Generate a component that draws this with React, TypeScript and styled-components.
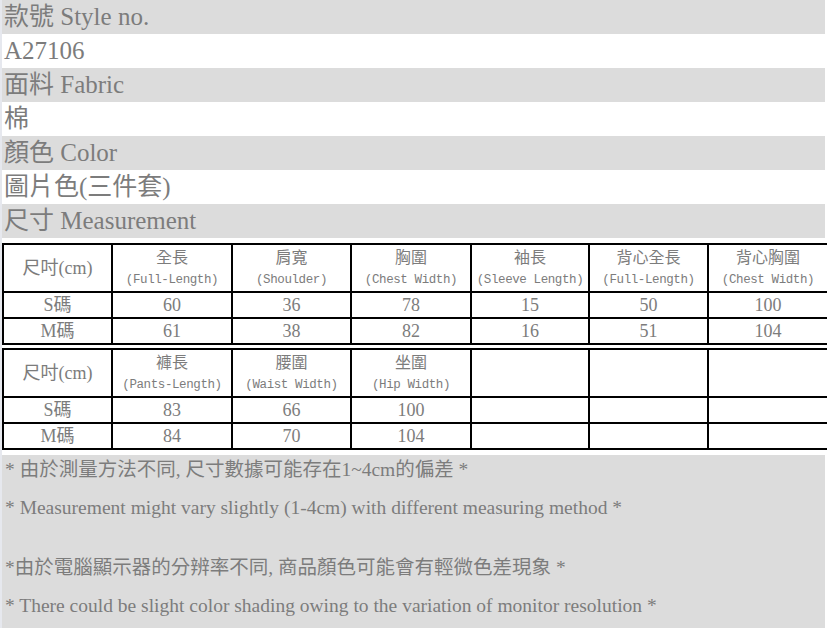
import React from "react";
import styled, { createGlobalStyle } from "styled-components";

const Global = createGlobalStyle`
  html, body { margin: 0; padding: 0; background: #ffffff; }
  body { width: 827px; height: 628px; overflow: hidden; }
`;

const serif = `"Liberation Serif", "Noto Sans CJK TC", serif`;

const Page = styled.div`
  width: 827px;
  height: 628px;
  display: flex;
  flex-direction: column;
  background: #ffffff;
  color: #7c7c7c;
  font-family: ${serif};
  border-left: 2px solid #e6e8ee;
  box-sizing: border-box;
`;

const InfoRow = styled.div<{ $shade: boolean }>`
  height: 34px;
  display: flex;
  align-items: center;
  padding-left: 2px;
  background: ${(p) => (p.$shade ? "#dcdcdc" : "#ffffff")};
  font-size: 25px;
  line-height: 34px;
  white-space: nowrap;
  margin-right: 2px;
`;

const Tables = styled.div`
  padding-top: 5px;
  display: flex;
  flex-direction: column;
  gap: 3px;
`;

const Table = styled.table`
  border-collapse: collapse;
  width: 825px;
  table-layout: fixed;
  font-family: ${serif};
  color: #7c7c7c;
`;

const Cell = styled.td<{ $head?: boolean }>`
  border: 2px solid #000;
  padding: 0;
  text-align: center;
  height: ${(p) => (p.$head ? "46px" : "24px")};
  font-size: 18px;
  line-height: 22px;
  vertical-align: middle;
  white-space: nowrap;
`;

const HeadZh = styled.div`
  font-size: 16px;
  line-height: 22px;
  padding-top: 1px;
`;

const HeadEn = styled.div`
  font-family: "Liberation Mono", "DejaVu Sans Mono", monospace;
  font-size: 12.5px;
  line-height: 22px;
  letter-spacing: -0.4px;
`;

const Notes = styled.div`
  margin-top: 5px;
  flex: 1;
  background: #dcdcdc;
  padding: 0 0 0 3px;
  font-size: 19.5px;
  font-family: ${serif};
  color: #7c7c7c;
  margin-right: 2px;
`;

const Note = styled.div<{ $gap?: number }>`
  line-height: 38px;
  margin-top: ${(p) => p.$gap ?? 0}px;
  white-space: nowrap;
`;

const info = [
  "款號 Style no.",
  "A27106",
  "面料 Fabric",
  "棉",
  "顏色 Color",
  "圖片色(三件套)",
  "尺寸 Measurement",
];

type Col = { zh: string; en: string };

const cols1: Col[] = [
  { zh: "全長", en: "(Full-Length)" },
  { zh: "肩寬", en: "(Shoulder)" },
  { zh: "胸圍", en: "(Chest Width)" },
  { zh: "袖長", en: "(Sleeve Length)" },
  { zh: "背心全長", en: "(Full-Length)" },
  { zh: "背心胸圍", en: "(Chest Width)" },
];
const rows1 = [
  { size: "S碼", vals: ["60", "36", "78", "15", "50", "100"] },
  { size: "M碼", vals: ["61", "38", "82", "16", "51", "104"] },
];

const cols2: Col[] = [
  { zh: "褲長", en: "(Pants-Length)" },
  { zh: "腰圍", en: "(Waist Width)" },
  { zh: "坐圍", en: "(Hip Width)" },
  { zh: "", en: "" },
  { zh: "", en: "" },
  { zh: "", en: "" },
];
const rows2 = [
  { size: "S碼", vals: ["83", "66", "100", "", "", ""] },
  { size: "M碼", vals: ["84", "70", "104", "", "", ""] },
];

const widths = [109, 120, 119, 120, 118, 119, 120];

function SizeTable({ cols, rows }: { cols: Col[]; rows: { size: string; vals: string[] }[] }) {
  return (
    <Table>
      <colgroup>
        {widths.map((w, i) => (
          <col key={i} style={{ width: w }} />
        ))}
      </colgroup>
      <tbody>
        <tr>
          <Cell $head>尺吋(cm)</Cell>
          {cols.map((c, i) => (
            <Cell $head key={i}>
              {c.zh && <HeadZh>{c.zh}</HeadZh>}
              {c.en && <HeadEn>{c.en}</HeadEn>}
            </Cell>
          ))}
        </tr>
        {rows.map((r) => (
          <tr key={r.size}>
            <Cell>{r.size}</Cell>
            {r.vals.map((v, i) => (
              <Cell key={i}>{v}</Cell>
            ))}
          </tr>
        ))}
      </tbody>
    </Table>
  );
}

export default function App() {
  return (
    <>
      <Global />
      <Page>
        {info.map((t, i) => (
          <InfoRow key={i} $shade={i % 2 === 0}>
            {t}
          </InfoRow>
        ))}
        <Tables>
          <SizeTable cols={cols1} rows={rows1} />
          <SizeTable cols={cols2} rows={rows2} />
        </Tables>
        <Notes>
          <Note $gap={-4}>* 由於測量方法不同, 尺寸數據可能存在1~4cm的偏差 *</Note>
          <Note>* Measurement might vary slightly (1-4cm) with different measuring method *</Note>
          <Note $gap={22}>*由於電腦顯示器的分辨率不同, 商品顏色可能會有輕微色差現象 *</Note>
          <Note>* There could be slight color shading owing to the variation of monitor resolution *</Note>
        </Notes>
      </Page>
    </>
  );
}
